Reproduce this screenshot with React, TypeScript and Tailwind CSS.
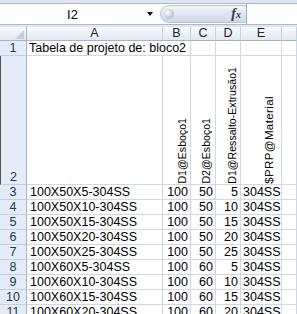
const rows = [
  ["3", "100X50X5-304SS", "100", "50", "5"],
  ["4", "100X50X10-304SS", "100", "50", "10"],
  ["5", "100X50X15-304SS", "100", "50", "15"],
  ["6", "100X50X20-304SS", "100", "50", "20"],
  ["7", "100X50X25-304SS", "100", "50", "25"],
  ["8", "100X60X5-304SS", "100", "60", "5"],
  ["9", "100X60X10-304SS", "100", "60", "10"],
  ["10", "100X60X15-304SS", "100", "60", "15"],
  ["11", "100X60X20-304SS", "100", "60", "20"],
]

const hdr =
  "h-[14px] border-r border-b border-r-[#c5d1df] border-b-[#9eb6ce] bg-gradient-to-b from-[#f8fafd] to-[#e2e8f0] flex items-center justify-center text-[12.5px] leading-none text-[#222]"
const rowHdr =
  "border-r border-b border-r-[#9eb6ce] border-b-[#c3d0e1] bg-[#e4ecf7] flex items-end justify-center text-[12.5px] leading-[14px] text-[#1e3658]"
const cell = "border-r border-b border-[#d0d7e5] flex items-end text-[12.5px] leading-[14px] text-black whitespace-nowrap overflow-hidden"

export default function App() {
  return (
    <div className="w-[297px] h-[314px] overflow-hidden bg-white font-['Liberation_Sans',Arial,sans-serif]">
      {/* formula bar */}
      <div className="h-[27px] bg-[#dfe6ef] pt-[3px] pb-[2px]">
        <div className="h-[22px] bg-white border-y border-[#a9b9cc] flex items-center">
          <div className="w-[145px] text-center text-[13px] text-black leading-none">I2</div>
          <div className="w-0 h-0 border-x-[3px] border-x-transparent border-t-[4px] border-t-black ml-[2px]" />
          <div className="ml-[7px] w-[86px] h-[18px] rounded-l-full bg-gradient-to-b from-[#f3f6fb] via-[#dfe6f0] to-[#cdd8e6] border border-r-0 border-[#b4c2d4] flex items-center">
            <div className="ml-[3px] w-[10px] h-[10px] rounded-full bg-[radial-gradient(circle_at_35%_35%,#ffffff,#b8bec8_70%,#9aa2ae)]" />
            <div className="ml-auto mr-[5px] font-['Liberation_Serif',serif] italic font-bold text-[14px] leading-none text-[#3a3a3a]">
              f<span className="text-[10px]">x</span>
            </div>
          </div>
          <div className="w-px h-full bg-[#9fb0c5]" />
          <div className="flex-1" />
        </div>
      </div>

      {/* sheet */}
      <div className="grid grid-cols-[27px_136px_28px_25px_25px_41px_1fr]">
        <div className="h-[14px] border-r border-b border-r-[#9eb6ce] border-b-[#9eb6ce] bg-gradient-to-b from-[#f8fafd] to-[#e2e8f0] flex items-end justify-end pr-[2px] pb-[1px]">
          <div className="w-0 h-0 border-l-[9px] border-l-transparent border-b-[9px] border-b-[#c3cfdd]" />
        </div>
        {["A", "B", "C", "D", "E", ""].map((c, i) => (
          <div key={i} className={hdr}>
            {c}
          </div>
        ))}

        <div className={rowHdr + " h-[15px]"}>1</div>
        <div className={cell + " col-span-2 pl-[2px] overflow-visible"}>Tabela de projeto de: bloco2</div>
        <div className={cell} />
        <div className={cell} />
        <div className={cell} />
        <div className={cell} />

        <div className={rowHdr + " h-[129px] border-l border-l-[#555]"}>2</div>
        <div className={cell} />
        <div className={cell + " justify-end pr-[2px]"}>
          <span className="[writing-mode:vertical-rl] rotate-180 text-[10.6px] leading-[11px]">D1@Esboço1</span>
        </div>
        <div className={cell + " justify-end pr-[3px]"}>
          <span className="[writing-mode:vertical-rl] rotate-180 text-[10.6px] leading-[11px]">D2@Esboço1</span>
        </div>
        <div className={cell + " justify-end pr-[2px]"}>
          <span className="[writing-mode:vertical-rl] rotate-180 text-[10.6px] leading-[11px]">D1@Ressalto-Extrusão1</span>
        </div>
        <div className={cell + " justify-end pr-[5px]"}>
          <span className="[writing-mode:vertical-rl] rotate-180 text-[11.5px] leading-[13px] tracking-[0.4px]">$PRP@Material</span>
        </div>
        <div className={cell} />

        {rows.map((r) => (
          <div key={r[0]} className="contents">
            <div className={rowHdr + " h-[15px]"}>{r[0]}</div>
            <div className={cell + " pl-[3px]"}>{r[1]}</div>
            <div className={cell + " justify-end pr-[2px]"}>{r[2]}</div>
            <div className={cell + " justify-end pr-[2px]"}>{r[3]}</div>
            <div className={cell + " justify-end pr-[2px]"}>{r[4]}</div>
            <div className={cell + " pl-[2px]"}>304SS</div>
            <div className={cell} />
          </div>
        ))}
      </div>
    </div>
  )
}
